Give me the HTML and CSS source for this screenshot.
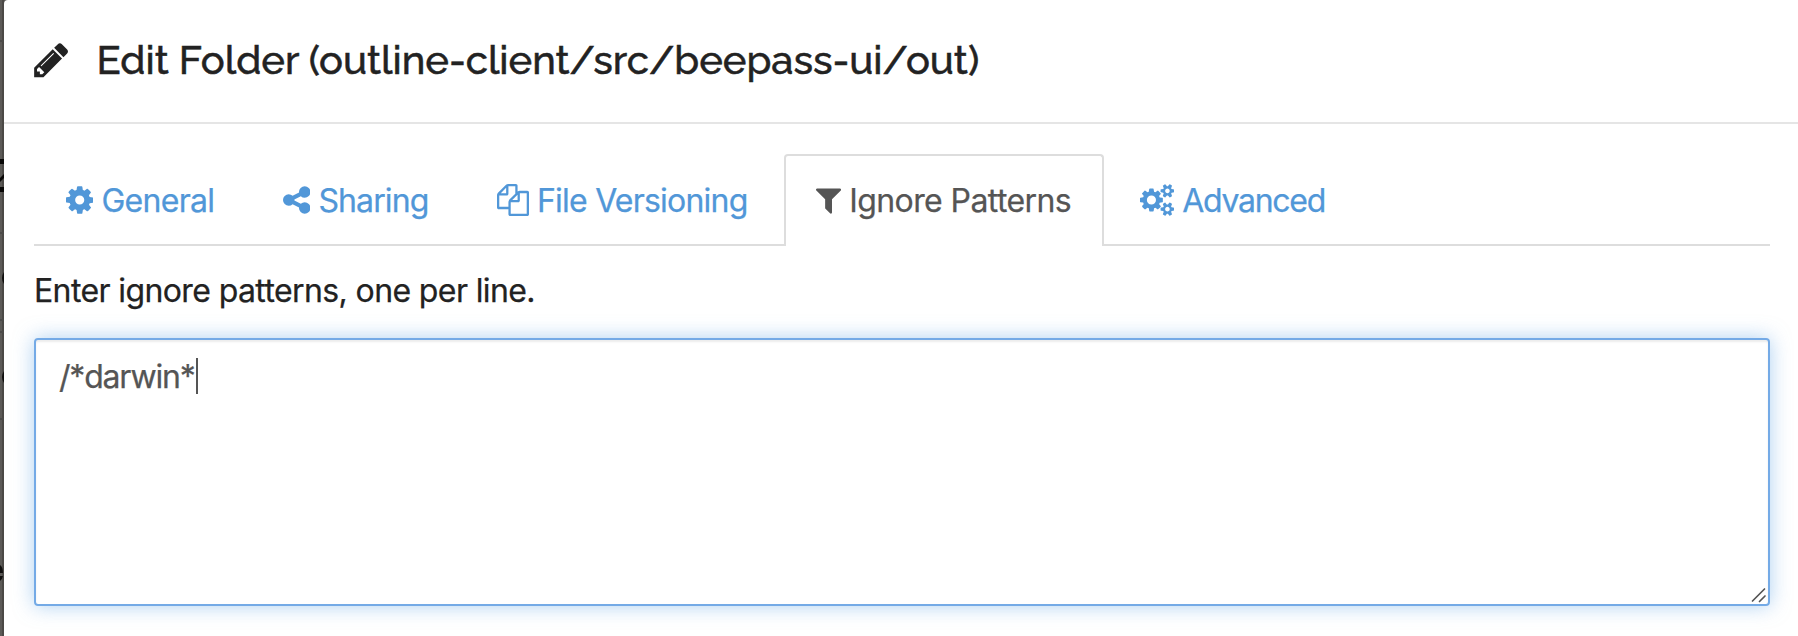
FILE: index.html
```html
<!DOCTYPE html>
<html lang="en">
<head>
<meta charset="utf-8">
<title>Edit Folder</title>
<link rel="stylesheet" href="styles.css">
</head>
<body>
<div class="page">
  <svg class="backdrop" viewBox="0 0 4 636" aria-hidden="true">
    <path d="M2 0h2v636H2z" fill="#4b4946"/>
    <path d="M0 40h4v2H0zM0 232h4v2H0zM0 319h4v2H0zM0 331h4v2H0zM0 418h4v2H0z" fill="#4c4b49"/>
    <path d="M0 159h4v5H0zM0 187h4v5H0zM0 178l4-4v4l-4 4z" fill="#080706"/>
    <path d="M4 272q-4 6 0 12zM4 371q-4 6 0 12zM0 565q3 2 3 8H0zM0 576h3q-1 4-3 5z" fill="#100f0e"/>
  </svg>
  <section class="dialog">
    <header class="dialog-header">
      <svg class="pencil" viewBox="128 0 1536 1792"><path d="M491 1536l91-91-235-235-91 91v107h128v128h107zm523-928q0-22-22-22-10 0-17 7l-542 542q-7 7-7 17 0 22 22 22 10 0 17-7l542-542q7-7 7-17zm-54-192l416 416-832 832h-416v-416zm683 96q0 53-37 90l-166 166-416-416 166-165q36-38 90-38 53 0 91 38l235 234q37 39 37 91z"/></svg>
      <h1 class="title">Edit Folder (outline-client/src/beepass-ui/out)</h1>
    </header>
    <div class="dialog-body">
      <nav class="tabs">
        <a class="tab tab-general"><svg class="icon" viewBox="128 0 1536 1792"><path d="M1152 896q0-106-75-181t-181-75-181 75-75 181 75 181 181 75 181-75 75-181zm512-109v222q0 12-8 23t-20 13l-185 28q-19 54-39 91 35 50 107 138 10 12 10 25t-9 23q-27 37-99 108t-94 71q-12 0-26-9l-138-108q-44 23-91 38-16 136-29 186-7 28-36 28h-222q-14 0-24.5-8.5t-11.5-21.5l-28-184q-49-16-90-37l-141 107q-10 9-25 9-14 0-25-11-126-114-165-168-7-10-7-23 0-12 8-23 15-21 51-66.5t54-70.5q-27-50-41-99l-183-27q-13-2-21-12.5t-8-23.5v-222q0-12 8-23t19-13l186-28q14-46 39-92-40-57-107-138-10-12-10-24 0-10 9-23 26-36 98.5-107.5t94.5-71.5q13 0 26 10l138 107q44-23 91-38 16-136 29-186 7-28 36-28h222q14 0 24.5 8.5t11.5 21.5l28 184q49 16 90 37l142-107q9-9 24-9 13 0 25 10 129 119 165 170 7 8 7 22 0 12-8 23-15 21-51 66.5t-54 70.5q26 50 41 98l183 28q13 2 21 12.5t8 23.5z"/></svg><span>General</span></a>
        <a class="tab tab-sharing"><svg class="icon" viewBox="128 0 1536 1792"><path d="M1344 1024q133 0 226.5 93.5t93.5 226.5-93.5 226.5-226.5 93.5-226.5-93.5-93.5-226.5q0-12 2-34l-360-180q-92 86-218 86-133 0-226.5-93.5t-93.5-226.5 93.5-226.5 226.5-93.5q126 0 218 86l360-180q-2-22-2-34 0-133 93.5-226.5t226.5-93.5 226.5 93.5 93.5 226.5-93.5 226.5-226.5 93.5q-126 0-218-86l-360 180q2 22 2 34t-2 34l360 180q92-86 218-86z"/></svg><span>Sharing</span></a>
        <a class="tab tab-versioning"><svg class="icon" viewBox="0 0 1792 1792"><path d="M1696 384q40 0 68 28t28 68v1216q0 40-28 68t-68 28h-960q-40 0-68-28t-28-68v-288h-544q-40 0-68-28t-28-68v-672q0-40 20-88t48-76l408-408q28-28 76-48t88-20h416q40 0 68 28t28 68v328q68-40 128-40h416zm-544 213l-299 299h299v-299zm-640-384l-299 299h299v-299zm196 647l316-316v-416h-384v416q0 40-28 68t-68 28h-416v640h512v-256q0-40 20-88t48-76zm956 804v-1152h-384v416q0 40-28 68t-68 28h-416v640h896z"/></svg><span>File Versioning</span></a>
        <a class="tab tab-ignore active"><svg class="icon" viewBox="192 0 1408 1792"><path d="M1595 295q17 41-14 70l-493 493v742q0 42-39 59-13 5-25 5-27 0-45-19l-256-256q-19-19-19-45v-486l-493-493q-31-29-14-70 17-39 59-39h1280q42 0 59 39z"/></svg><span>Ignore Patterns</span></a>
        <a class="tab tab-advanced"><svg class="icon" viewBox="-64 0 1920 1792"><path d="M832 896q0-106-75-181t-181-75-181 75-75 181 75 181 181 75 181-75 75-181zm768 512q0-52-38-90t-90-38-90 38-38 90q0 53 37.5 90.5t90.5 37.5 90.5-37.5 37.5-90.5zm0-1024q0-52-38-90t-90-38-90 38-38 90q0 53 37.5 90.5t90.5 37.5 90.5-37.5 37.5-90.5zm-384 421v185q0 10-7 19.5t-16 10.5l-155 24q-11 35-32 76 34 48 90 115 7 11 7 20 0 12-7 19-23 30-82.5 89.5t-78.5 59.5q-11 0-21-7l-115-90q-37 19-77 31-11 108-23 155-7 24-30 24h-186q-11 0-20-7.5t-10-17.5l-23-153q-34-10-75-31l-118 89q-7 7-20 7-11 0-21-8-144-133-144-160 0-9 7-19 10-14 41-53t47-61q-23-44-35-82l-152-24q-10-1-17-9.5t-7-19.5v-185q0-10 7-19.5t16-10.5l155-24q11-35 32-76-34-48-90-115-7-11-7-20 0-12 7-20 22-30 82-89t79-59q11 0 21 7l115 90q34-18 77-32 11-108 23-154 7-24 30-24h186q11 0 20 7.5t10 17.5l23 153q34 10 75 31l118-89q8-7 20-7 11 0 21 8 144 133 144 160 0 8-7 19-12 16-42 54t-45 60q23 48 34 82l152 23q10 2 17 10.5t7 19.5zm640 533v140q0 16-149 31-12 27-30 52 51 113 51 138 0 4-4 7-122 71-124 71-8 0-46-47t-52-68q-20 2-30 2t-30-2q-14 21-52 68t-46 47q-2 0-124-71-4-3-4-7 0-25 51-138-18-25-30-52-149-15-149-31v-140q0-16 149-31 13-29 30-52-51-113-51-138 0-4 4-7 4-2 35-20t59-34 30-16q8 0 46 46.5t52 67.5q20-2 30-2t30 2q51-71 92-112l6-2q4 0 124 70 4 3 4 7 0 25-51 138 17 23 30 52 149 15 149 31zm0-1024v140q0 16-149 31-12 27-30 52 51 113 51 138 0 4-4 7-122 71-124 71-8 0-46-47t-52-68q-20 2-30 2t-30-2q-14 21-52 68t-46 47q-2 0-124-71-4-3-4-7 0-25 51-138-18-25-30-52-149-15-149-31v-140q0-16 149-31 13-29 30-52-51-113-51-138 0-4 4-7 4-2 35-20t59-34 30-16q8 0 46 46.5t52 67.5q20-2 30-2t30 2q51-71 92-112l6-2q4 0 124 70 4 3 4 7 0 25-51 138 17 23 30 52 149 15 149 31z"/></svg><span>Advanced</span></a>
      </nav>
      <p class="hint"><span>Enter ignore patterns, one per line.</span></p>
      <div class="editor">
        <span class="pattern">/*darwin*</span><span class="caret"></span>
        <svg class="grip" viewBox="0 0 16 16"><path d="M1.5 14L13.5 2M8.5 14.5l5.5-5.5"/></svg>
      </div>
    </div>
  </section>
</div>
</body>
</html>
```
FILE: styles.css
```css
* { box-sizing: border-box; }
body {
  margin: 0;
  overflow: hidden;
  background: #5c5a57;
  color: #222;
  font: 400 32px/44px Inter, "Liberation Sans", sans-serif;
  -webkit-text-stroke: 0.25px currentColor;
}
.page { display: flex; height: 636px; }
.backdrop { flex: none; width: 4px; height: 636px; }
.dialog { flex: 1; background: #fff; border-top-left-radius: 4px; }
.dialog-header {
  display: flex;
  height: 124px;
  padding: 36px 30px 0;
  border-bottom: 2px solid #e5e5e5;
}
.pencil { flex: none; width: 34.6px; height: 40px; margin-top: 4px; fill: #222; }
.title {
  margin: 0 0 0 28px;
  font: 500 40px/48px Raleway, Lato, sans-serif;
  letter-spacing: -0.02px;
  white-space: nowrap;
  -webkit-text-stroke: 0.5px currentColor;
}
.dialog-body { padding: 30px 28px 0 30px; }
.tabs {
  display: flex;
  gap: 4px;
  height: 92px;
  border-bottom: 2px solid #ddd;
}
.tab {
  display: flex;
  gap: 8px;
  height: 92px;
  padding: 23px 0 0 30px;
  border: 2px solid transparent;
  border-bottom: 0;
  border-radius: 4px 4px 0 0;
  color: #5197d8;
  white-space: nowrap;
}
.tab.active { border-color: #ddd; background: #fff; color: #555; }
.tab-general { width: 213px; letter-spacing: -0.72px; }
.tab-sharing { width: 210px; letter-spacing: -0.9px; }
.tab-versioning { width: 315px; letter-spacing: -0.78px; }
.tab-ignore { width: 320px; letter-spacing: -0.58px; }
.tab-advanced { letter-spacing: -1.3px; }
.icon { flex: none; height: 32px; margin-top: 5px; fill: currentColor; }
.hint { margin: 23px 0 25px; letter-spacing: -0.61px; }
.editor {
  position: relative;
  display: flex;
  height: 268px;
  padding: 15px 24px 14px 23px;
  border: 2px solid #74aae6;
  border-radius: 4px;
  color: #555;
  letter-spacing: -1.2px;
  box-shadow: inset 0 2px 2px rgba(0, 0, 0, .075), 0 0 20px rgba(105, 170, 230, .55);
}
.caret { width: 2px; height: 36px; margin: 3px 0 0 1px; background: #555; }
.grip {
  position: absolute;
  right: 1px;
  bottom: 1px;
  width: 16px;
  height: 16px;
  fill: none;
  stroke: #555;
  stroke-width: 1.7;
  stroke-linecap: round;
}
```
